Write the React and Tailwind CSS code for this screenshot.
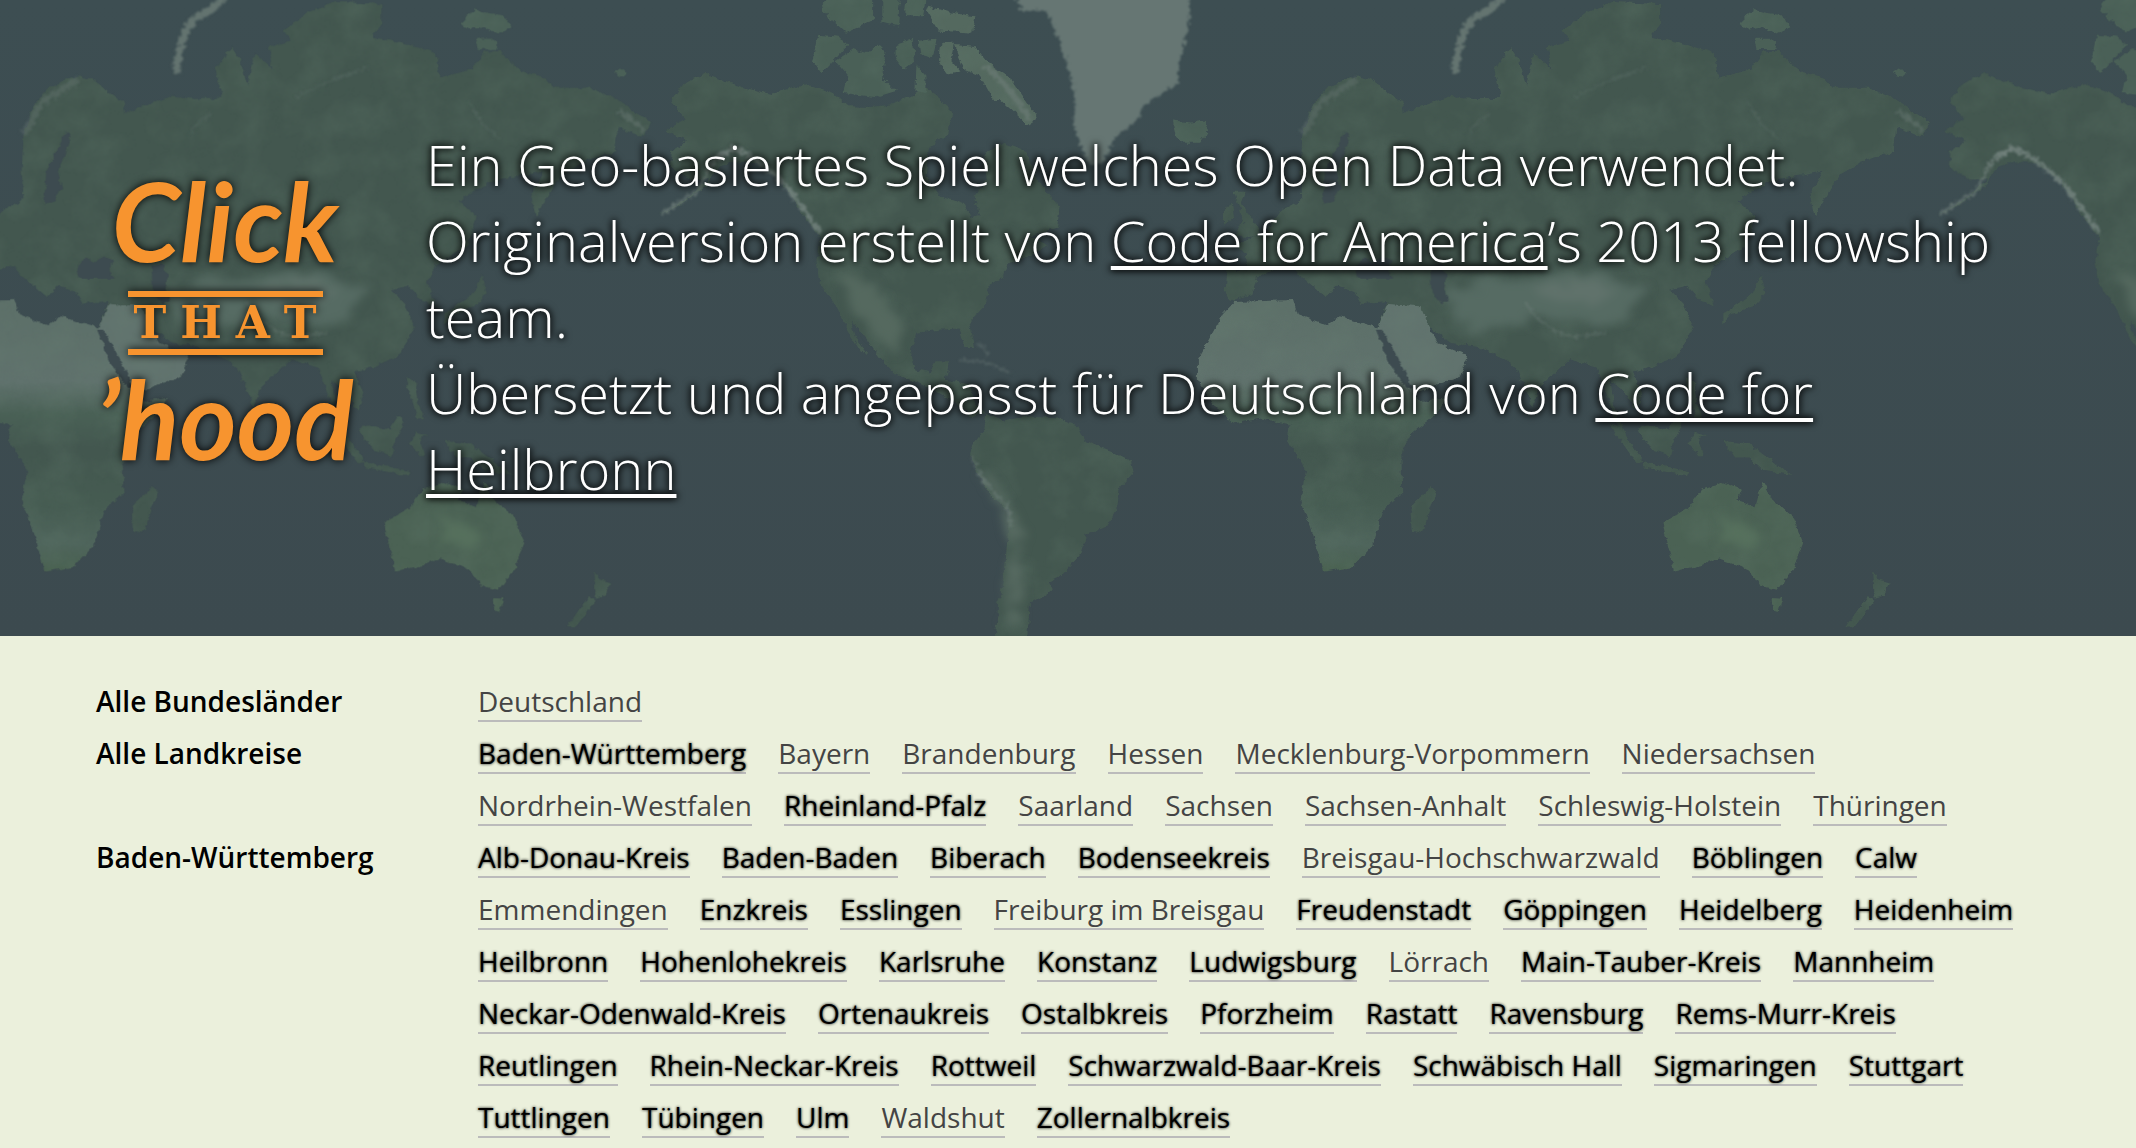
function World() {
  return (
    <g id="world">
      <g filter="url(#coast)">
        <g fill="#43574f">
          <path d="M-18 178L70 215 130 230 210 205 270 230 300 260 350 262 400 255 440 235 470 215 500 240 530 270 520 330 480 360 470 430 500 480 555 500 570 535 588 530 578 480 605 440 600 380 640 350 690 370 710 430 765 510 760 560 700 580 740 600 700 625 650 650 640 680 610 700 600 750 565 790 577 850 558 850 545 805 500 808 450 815 438 860 448 905 480 912 492 885 522 885 515 930 568 942 580 990 604 1012 570 1020 530 980 460 940 400 915 370 880 340 830 306 785 318 830 346 870 330 862 300 810 275 755 240 700 230 640 237 580 192 510 152 440 102 400 52 395 12 410 -18 460 -68 500 -118 530 -48 480 -8 440 -48 440 -93 410 -88 370 -53 345 -103 320 -58 290 -93 250 -68 210Z" />
          <path d="M604 1012L640 1030 700 1020 760 1025 805 1045 820 1080 880 1105 925 1130 930 1155 895 1200 890 1250 870 1290 825 1310 810 1360 770 1410 740 1425 750 1445 700 1480 690 1620 622 1620 630 1480 645 1400 655 1250 610 1210 570 1125 575 1085 600 1050Z" />
          <path fill="url(#africa)" d="M1150 740L1280 735 1290 770 1355 797 1380 775 1460 800 1485 860 1540 960 1568 985 1618 975 1598 1010 1538 1065 1518 1110 1520 1210 1478 1250 1458 1330 1408 1390 1348 1400 1313 1280 1296 1225 1308 1150 1268 1080 1272 1040 1210 1025 1150 1037 1110 1000 1070 930 1070 880 1100 820 1125 770Z" />
          <path d="M1300 330L1320 260 1360 210 1420 185 1450 195 1520 250 1525 290 1490 300 1548 265 1628 235 1678 240 1738 240 1723 170 1758 115 1778 150 1793 210 1808 130 1848 170 1838 115 1888 100 1873 75 1928 30 1988 5 2088 10 2088 60 2068 90 2148 110 2208 130 2218 190 2288 170 2318 125 2348 125 2398 175 2448 190 2468 215 2548 215 2618 250 2683 300 2663 335 2608 310 2603 370 2528 400 2480 430 2428 530 2418 480 2448 420 2398 430 2338 440 2258 490 2298 530 2278 600 2208 650 2188 690 2208 750 2178 740 2148 700 2108 710 2138 745 2162 800 2128 870 2068 900 2028 910 2048 960 2038 1010 2008 960 1978 930 1988 1000 2020 1085 1990 1040 1963 940 1948 900 1888 880 1820 950 1808 1000 1793 960 1773 905 1748 880 1688 850 1628 840 1578 800 1598 840 1665 870 1648 920 1578 950 1538 965 1488 870 1463 810 1488 738 1428 742 1413 712 1378 700 1358 720 1330 680 1368 715 1350 725 1300 680 1278 650 1240 660 1200 680 1190 720 1150 737 1130 725 1135 660 1180 662 1175 620 1150 600 1220 570 1250 520 1300 490 1296 420Z" />
          <path d="M1150 470L1175 470 1165 500 1205 560 1200 580 1150 580 1170 540ZM1125 515l20-15 5 35-22 15Z" />
          <path d="M1585 1188l10 15-32 102-20-5-3-60Z" />
          <path d="M2036 1052l20-12 50 12 20-35 12 20-20 45-8 35-40-15ZM1973 1035l28 15 50 80-15 5ZM2050 1132l100 22-5 12-95-22ZM2150 1085l12-25 25 5-15 10 10 40-15 0ZM2225 1080l60 8 35 30 55 45-60-10-30-30-30 0ZM2140 925l22 5 5 50 15 45-15 0-10-40ZM2290 720l20-50 10 50-25 30-50 20-20 25 0-25Z" />
          <path d="M2555 1400l14 22 25 8-16 32-20 5ZM2545 1460l15 12-45 65-20 0Z" />
        </g>
        <path
          fill="#61736e"
          d="M1488 745L1560 750 1578 800 1598 840 1665 870 1648 920 1578 950 1538 965 1488 870 1463 810Z"
        />
        <g fill="#4b6254">
          <path d="M2093 1280L2148 1245 2178 1200 2208 1192 2223 1180 2268 1200 2258 1225 2298 1240 2313 1180 2338 1230 2383 1270 2403 1330 2378 1400 2348 1445 2308 1435 2288 1400 2258 1385 2218 1368 2178 1385 2118 1400 2108 1350ZM2335 1465l22 2-8 32-10-2Z" />
        </g>
        <g fill="#4a6057">
          <path d="M232 85l48 5 18 22-28 35-25 30-25-20ZM272 150l40-30 30 10 25-22 15 15-5 70 28 30-45 15-70-10 10-40ZM402 110l40-15 5 55-25 20-20-30ZM455 100l40-5-8 45-28-5ZM450 160l20 25 0 45-22-5ZM430-40l45 0-10 80-40 0ZM375-40l40 0-5 105-35-10ZM240 20l40-60 75 0 0 90-60 30-35-35Z" />
          <path d="M1015 295l40 5 30-5 10 25-20 30-40 0-12-20ZM2275 40l20-18 30 10 30 5 20 30-30 15-30-15-30 5-20-10ZM2295 95l40 0 10 25-45 0ZM2598 180l15-12 18 10-10 10Z" />
        </g>
        <g fill="#54695f">
          <path d="M478 15l45 15 55 10-5 40-75-5-25-45ZM505 105l28 0-8 45 20 25-25 5-20-30ZM535 110l45 5 30 40 50 40 55 90-15 25-65-65-15 0-30-60-35-15Z" />
        </g>
      </g>
      <g filter="url(#rough)">
        <path d="M660-40L680 25 735 25 760 90 790 180 800 260 795 300 815 370 835 405 862 400 885 340 940 290 950 260 1025 205 1030 150 1050 60 1055-40Z" fill="#667673" />
        <path d="M1745-20Q1728 20 1682 42Q1640 80 1638 180" fill="none" stroke="#647470" strokeWidth="17" />
      </g>
      <g filter="url(#haze)">
        <path d="M1620 710L1750 680 1960 665 2060 710 2010 780 1950 800 1880 770 1800 780 1700 810 1640 790Z" fill="#566b63" />
        <path d="M1800 700L1920 690 1990 710 1940 750 1860 735Z" fill="#60726b" />
        <path d="M280 680L360 690 420 800 400 870 350 800 310 750Z" fill="#55695f" />
        <path d="M2220 1270L2290 1280 2310 1330 2270 1340 2220 1320Z" fill="#56705d" />
        <path d="M600 1160Q660 1240 668 1300Q670 1400 655 1530" fill="none" stroke="#586b62" strokeWidth="18" />
      </g>
      <g fill="none" stroke="#73827e" filter="url(#rough)">
        <path d="M-110 525L-30 465 0 400 50 360" strokeWidth="8" opacity=".7" />
        <path d="M10 385L50 362 110 400 160 450 200 510 240 570" strokeWidth="11" opacity=".85" />
        <path d="M600 160L640 200 700 290" strokeWidth="14" opacity=".5" />
        <path d="M1300 330L1340 250 1420 195" strokeWidth="16" opacity=".3" />
        <path d="M1790 740Q1840 820 1900 825L1970 815" strokeWidth="6" opacity=".4" />
        <path d="M2610 270L2670 320" strokeWidth="12" opacity=".4" />
        <path d="M572 1120Q605 1205 650 1235L660 1290" strokeWidth="5" opacity=".6" />
        <path d="M550 880L610 890 660 915M585 840L610 870" strokeWidth="7" opacity=".35" />
        <path d="M1665 330Q1680 300 1710 280M1900 240Q1960 200 2060 165M2280 250Q2310 310 2350 340" strokeWidth="5" opacity=".25" />
      </g>
      <g fill="#3d4b50" filter="url(#water)">
        <path d="M1418 655l15-20 25 5 20-12 20 12-10 15 12 28-45 0-32 0ZM1582 650l25-5 10 35-5 30 10 25-18 8-20-35Z" />
        <path d="M1345 500L1350 420 1395 320 1405 340 1375 420 1385 460 1365 495Z" />
        <path d="M1462 808l14 0 30 60 38 85-14-2-38-60Z" />
      </g>
    </g>
  );
}

function MapBackdrop() {
  return (
    <svg aria-hidden="true" viewBox="0 0 2136 636" preserveAspectRatio="xMidYMid slice" className="absolute inset-0 h-full w-full">
      <defs>
        <linearGradient id="sea" x1="0" y1="0" x2="0" y2="1">
          <stop offset="0" stopColor="#3d4e52" />
          <stop offset="1" stopColor="#3c4a4f" />
        </linearGradient>
        <linearGradient id="africa" x1="0" y1="0" x2="0" y2="1">
          <stop offset="0.05" stopColor="#5d7069" />
          <stop offset="0.3" stopColor="#60726d" />
          <stop offset="0.42" stopColor="#4a6156" />
          <stop offset="0.55" stopColor="#43574f" />
          <stop offset="0.75" stopColor="#465c52" />
          <stop offset="0.9" stopColor="#4f655c" />
          <stop offset="1" stopColor="#48604f" />
        </linearGradient>
        <filter id="coast" x="-5%" y="-5%" width="110%" height="110%" colorInterpolationFilters="sRGB">
          <feTurbulence type="fractalNoise" baseFrequency="0.06" numOctaves="4" seed="4" result="n" />
          <feDisplacementMap in="SourceGraphic" in2="n" scale="14" xChannelSelector="R" yChannelSelector="G" result="d" />
          <feTurbulence type="fractalNoise" baseFrequency="0.012" numOctaves="6" seed="9" />
          <feColorMatrix values="0 0 0 0 .42  0 0 0 0 .52  0 0 0 0 .46  .4 0 0 0 -.15" />
          <feComposite in2="d" operator="in" result="t" />
          <feMerge>
            <feMergeNode in="d" />
            <feMergeNode in="t" />
          </feMerge>
          <feGaussianBlur stdDeviation="1.6" />
        </filter>
        <filter id="water" x="-5%" y="-5%" width="110%" height="110%" colorInterpolationFilters="sRGB">
          <feTurbulence type="fractalNoise" baseFrequency="0.06" numOctaves="4" seed="4" result="n" />
          <feDisplacementMap in="SourceGraphic" in2="n" scale="14" xChannelSelector="R" yChannelSelector="G" />
          <feGaussianBlur stdDeviation="1.6" />
        </filter>
        <filter id="haze" x="-5%" y="-5%" width="110%" height="110%" colorInterpolationFilters="sRGB">
          <feTurbulence type="fractalNoise" baseFrequency="0.03" numOctaves="4" seed="2" result="n" />
          <feDisplacementMap in="SourceGraphic" in2="n" scale="60" xChannelSelector="R" yChannelSelector="G" />
          <feGaussianBlur stdDeviation="10" />
        </filter>
        <filter id="rough" x="-5%" y="-5%" width="110%" height="110%" colorInterpolationFilters="sRGB">
          <feTurbulence type="fractalNoise" baseFrequency="0.1" numOctaves="3" seed="7" result="n" />
          <feDisplacementMap in="SourceGraphic" in2="n" scale="22" xChannelSelector="R" yChannelSelector="G" />
          <feGaussianBlur stdDeviation="2" />
        </filter>
      </defs>
      <rect width="2136" height="636" fill="url(#sea)" />
      <g transform="translate(712 0) scale(.4541 .4082)">
        <World />
        <use href="#world" x="-2816" />
        <use href="#world" x="2816" />
      </g>
    </svg>
  );
}

function Logo() {
  return (
    <h1 className="flex w-[258px] shrink-0 flex-col items-center pt-1 text-[#f7942f] [filter:drop-shadow(0_0_4px_#000)]">
      <span className="mb-4 font-[Lato,sans-serif] text-[110px] leading-[112px] font-bold italic">Click</span>
      <span className="flex h-16 w-[195px] items-center justify-between border-y-6 border-[#f7942f] px-1.5 font-['DejaVu_Serif',serif] text-[44px] leading-none font-bold">
        <span>T</span>
        <span>H</span>
        <span>A</span>
        <span>T</span>
      </span>
      <span className="mt-1.5 font-[Lato,sans-serif] text-[110px] leading-[112px] font-bold italic">’hood</span>
    </h1>
  );
}

function IntroLink({ children }) {
  return (
    <a href="#" className="underline decoration-4 underline-offset-4 [text-decoration-skip-ink:none]">
      {children}
    </a>
  );
}

// A leading "*" marks a place that can be played.
const GROUPS = [
  { title: "Alle Bundesländer", places: ["Deutschland"] },
  {
    title: "Alle Landkreise",
    places: ["*Baden-Württemberg", "Bayern", "Brandenburg", "Hessen", "Mecklenburg-Vorpommern", "Niedersachsen", "Nordrhein-Westfalen", "*Rheinland-Pfalz", "Saarland", "Sachsen", "Sachsen-Anhalt", "Schleswig-Holstein", "Thüringen"],
  },
  {
    title: "Baden-Württemberg",
    places: ["*Alb-Donau-Kreis", "*Baden-Baden", "*Biberach", "*Bodenseekreis", "Breisgau-Hochschwarzwald", "*Böblingen", "*Calw", "Emmendingen", "*Enzkreis", "*Esslingen", "Freiburg im Breisgau", "*Freudenstadt", "*Göppingen", "*Heidelberg", "*Heidenheim", "*Heilbronn", "*Hohenlohekreis", "*Karlsruhe", "*Konstanz", "*Ludwigsburg", "Lörrach", "*Main-Tauber-Kreis", "*Mannheim", "*Neckar-Odenwald-Kreis", "*Ortenaukreis", "*Ostalbkreis", "*Pforzheim", "*Rastatt", "*Ravensburg", "*Rems-Murr-Kreis", "*Reutlingen", "*Rhein-Neckar-Kreis", "*Rottweil", "*Schwarzwald-Baar-Kreis", "*Schwäbisch Hall", "*Sigmaringen", "*Stuttgart", "*Tuttlingen", "*Tübingen", "*Ulm", "Waldshut", "*Zollernalbkreis"],
  },
];

function Place({ name }) {
  const active = name.startsWith("*");
  return (
    <li>
      <a
        href="#"
        className={
          active
            ? "border-b-2 border-[#bbbbbb] text-black [text-shadow:0_0_3px_#000]"
            : "border-b-2 border-[#bbbbbb] text-[#444444]"
        }
      >
        {active ? name.slice(1) : name}
      </a>
    </li>
  );
}

export default function App() {
  return (
    <div className="min-h-screen bg-[#ebf0dc] font-['Open_Sans',sans-serif]">
      <header className="relative overflow-hidden bg-[#3c4a4f]">
        <MapBackdrop />
        <div className="relative flex items-center gap-[72px] px-24 pt-[126px] pb-[130px]">
          <Logo />
          <p className="flex-1 text-[56px] leading-[76px] font-light text-white [text-shadow:0_0_8px_#000,0_0_6px_#000]">
            Ein Geo-basiertes Spiel welches Open Data verwendet.
            <br />
            Originalversion erstellt von <IntroLink>Code for America</IntroLink>’s 2013 fellowship team.
            <br />
            Übersetzt und angepasst für Deutschland von <IntroLink>Code for Heilbronn</IntroLink>
          </p>
        </div>
      </header>
      <main className="px-24 pt-[39px] text-[28px] leading-[52px]">
        {GROUPS.map((group) => (
          <section key={group.title} className="flex">
            <h2 className="w-[382px] shrink-0 font-semibold text-black">{group.title}</h2>
            <ul className="flex flex-1 flex-wrap gap-x-8">
              {group.places.map((name) => (
                <Place key={name} name={name} />
              ))}
            </ul>
          </section>
        ))}
      </main>
    </div>
  );
}
